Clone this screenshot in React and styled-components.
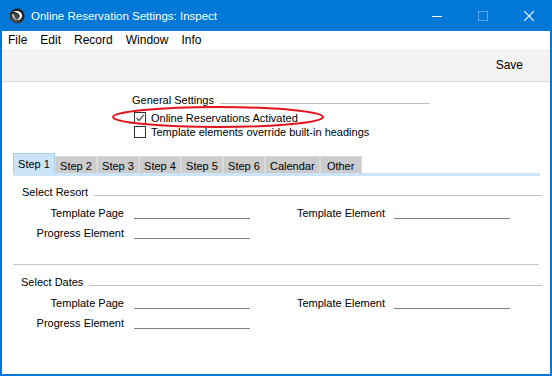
import styled, { createGlobalStyle } from "styled-components";

const Global = createGlobalStyle`
  html, body { margin: 0; padding: 0; background: #fff; }
  body { font-family: "Liberation Sans", Arial, sans-serif; }
`;

const Window = styled.div`
  width: 552px;
  height: 376px;
  box-sizing: border-box;
  display: flex;
  flex-direction: column;
  border: 2px solid #0078d7;
  border-top: none;
  overflow: hidden;
  background: #fff;
`;

const TitleBar = styled.div`
  height: 31px;
  flex: none;
  background: #0078d7;
  display: flex;
  align-items: center;
  color: #fff;
  margin: 0 -2px;
`;

const AppIcon = styled.svg`
  width: 16px;
  height: 16px;
  margin-left: 9px;
  margin-right: 6px;
`;

const Title = styled.div`
  font-size: 11.5px;
  flex: 1;
`;

const WinButton = styled.div`
  width: 46px;
  height: 31px;
  display: flex;
  align-items: center;
  justify-content: center;
  opacity: ${(p) => (p.disabled ? 0.35 : 1)};
`;

const MenuBar = styled.div`
  height: 18px;
  flex: none;
  display: flex;
  align-items: center;
  gap: 13px;
  padding-left: 6px;
  font-size: 12px;
  color: #000;
`;

const Toolbar = styled.div`
  height: 32px;
  flex: none;
  background: #f3f3f4;
  border-bottom: 1px solid #dcdcdc;
  display: flex;
  align-items: center;
  justify-content: flex-end;
  padding-right: 27px;
  font-size: 12px;
  color: #000;
`;

const Body = styled.div`
  flex: 1;
  padding-top: 11px;
  font-size: 11px;
  color: #000;
`;

const General = styled.div`
  position: relative;
  margin-left: 130px;
  width: 298px;
`;

const HeadRow = styled.div`
  height: 14px;
  display: flex;
  align-items: center;
  gap: 6px;
`;

const HeadLine = styled.div`
  flex: 1;
  height: 1px;
  margin-top: 6px;
  background: #c0c0c0;
`;

const CheckRow = styled.div`
  height: 14px;
  display: flex;
  align-items: center;
  gap: 5px;
  padding-left: 2px;
  margin-top: ${(p) => p.$top || 0}px;
`;

const Box = styled.div`
  width: 10px;
  height: 10px;
  border: 1px solid #333;
  background: #fff;
  display: flex;
  align-items: center;
  justify-content: center;
`;

const Ellipse = styled.svg`
  position: absolute;
  left: -20px;
  top: 13px;
  width: 212px;
  height: 22px;
  overflow: visible;
`;

const Tabs = styled.div`
  margin: 14px 10px 0 11px;
  display: flex;
  align-items: flex-end;
  border-bottom: 3px solid #cce4f7;
`;

const Tab = styled.div`
  height: ${(p) => (p.$on ? 20 : 17)}px;
  min-width: 42px;
  box-sizing: border-box;
  padding: ${(p) => (p.$on ? "0 4px" : "1px 4px 0")};
  display: flex;
  align-items: center;
  justify-content: center;
  font-size: 11px;
  background: ${(p) => (p.$on ? "#cce4f7" : "#cccccc")};
  border: 1px solid ${(p) => (p.$on ? "#a9d1f2" : "#dadada")};
  border-bottom: none;
`;

const Panel = styled.div`
  padding-top: 9px;
`;

const Section = styled.div``;

const SectionHead = styled(HeadRow)`
  padding-left: 20px;
  padding-right: 8px;
  margin-left: ${(p) => p.$shift || 0}px;
`;

const Grid = styled.div`
  margin-top: 4px;
  margin-left: 11px;
  display: grid;
  grid-template-columns: 121px 116px 144px 116px;
  grid-auto-rows: 20px;
`;

const Label = styled.div`
  text-align: right;
  padding-right: ${(p) => p.$pad || 10}px;
  line-height: 20px;
  white-space: nowrap;
`;

const Field = styled.div`
  height: 19px;
  border-bottom: 1px solid #808080;
  box-sizing: border-box;
  margin-bottom: 4px;
  align-self: end;
`;

const Separator = styled.div`
  height: 1px;
  background: #c8c8c8;
  margin: 21px 11px 10px 11px;
`;

const tabs = ["Step 1", "Step 2", "Step 3", "Step 4", "Step 5", "Step 6", "Calendar", "Other"];

const Logo = () => (
  <AppIcon viewBox="0 0 16 16">
    <defs>
      <radialGradient id="g" cx="0.35" cy="0.7" r="0.8">
        <stop offset="0" stopColor="#5a5a5a" />
        <stop offset="1" stopColor="#111" />
      </radialGradient>
    </defs>
    <circle cx="8" cy="8" r="7.5" fill="url(#g)" />
    <path d="M4 3.6 C7.5 2.2 12.6 3.4 13 7 C13.3 10.2 10.4 12.4 7.4 12 C9.8 11 11.2 9.2 10.6 7.2 C10 5.2 7.2 4 4 3.6 Z" fill="#fff" />
    <path d="M3 6.4 C3.4 9.4 5.6 11.6 8.4 12.2 C6.2 10.8 4.8 8.8 5 6.6 C4.4 6.2 3.6 6.2 3 6.4 Z" fill="#d8d8d8" />
  </AppIcon>
);

const Fields = () => (
  <Grid>
    <Label>Template Page</Label>
    <Field />
    <Label $pad={9}>Template Element</Label>
    <Field />
    <Label>Progress Element</Label>
    <Field />
  </Grid>
);

export default function App() {
  return (
    <>
      <Global />
      <Window>
        <TitleBar>
          <Logo />
          <Title>Online Reservation Settings: Inspect</Title>
          <WinButton>
            <svg width="10" height="10" viewBox="0 0 10 10">
              <path d="M0 5.5 H10" stroke="#fff" strokeWidth="1" />
            </svg>
          </WinButton>
          <WinButton disabled>
            <svg width="10" height="10" viewBox="0 0 10 10">
              <rect x="0.5" y="0.5" width="9" height="9" fill="none" stroke="#fff" strokeWidth="1" />
            </svg>
          </WinButton>
          <WinButton>
            <svg width="10" height="10" viewBox="0 0 10 10">
              <path d="M0 0 L10 10 M10 0 L0 10" stroke="#fff" strokeWidth="1.1" />
            </svg>
          </WinButton>
        </TitleBar>
        <MenuBar>
          <span>File</span>
          <span>Edit</span>
          <span>Record</span>
          <span>Window</span>
          <span>Info</span>
        </MenuBar>
        <Toolbar>Save</Toolbar>
        <Body>
          <General>
            <HeadRow>
              <span>General Settings</span>
              <HeadLine />
            </HeadRow>
            <CheckRow $top={4}>
              <Box>
                <svg width="10" height="10" viewBox="0 0 10 10">
                  <path d="M1.5 5 L4 7.5 L8.8 1.8" fill="none" stroke="#555" strokeWidth="1.2" />
                </svg>
              </Box>
              <span>Online Reservations Activated</span>
            </CheckRow>
            <CheckRow>
              <Box />
              <span>Template elements override built-in headings</span>
            </CheckRow>
            <Ellipse viewBox="0 0 212 22">
              <ellipse cx="106" cy="11" rx="105" ry="10" fill="none" stroke="#e0141c" strokeWidth="2" />
            </Ellipse>
          </General>
          <Tabs>
            {tabs.map((t, i) => (
              <Tab key={t} $on={i === 0}>
                {t}
              </Tab>
            ))}
          </Tabs>
          <Panel>
            <Section>
              <SectionHead>
                <span>Select Resort</span>
                <HeadLine />
              </SectionHead>
              <Fields />
            </Section>
            <Separator />
            <Section>
              <SectionHead $shift={-1}>
                <span>Select Dates</span>
                <HeadLine />
              </SectionHead>
              <Fields />
            </Section>
          </Panel>
        </Body>
      </Window>
    </>
  );
}
